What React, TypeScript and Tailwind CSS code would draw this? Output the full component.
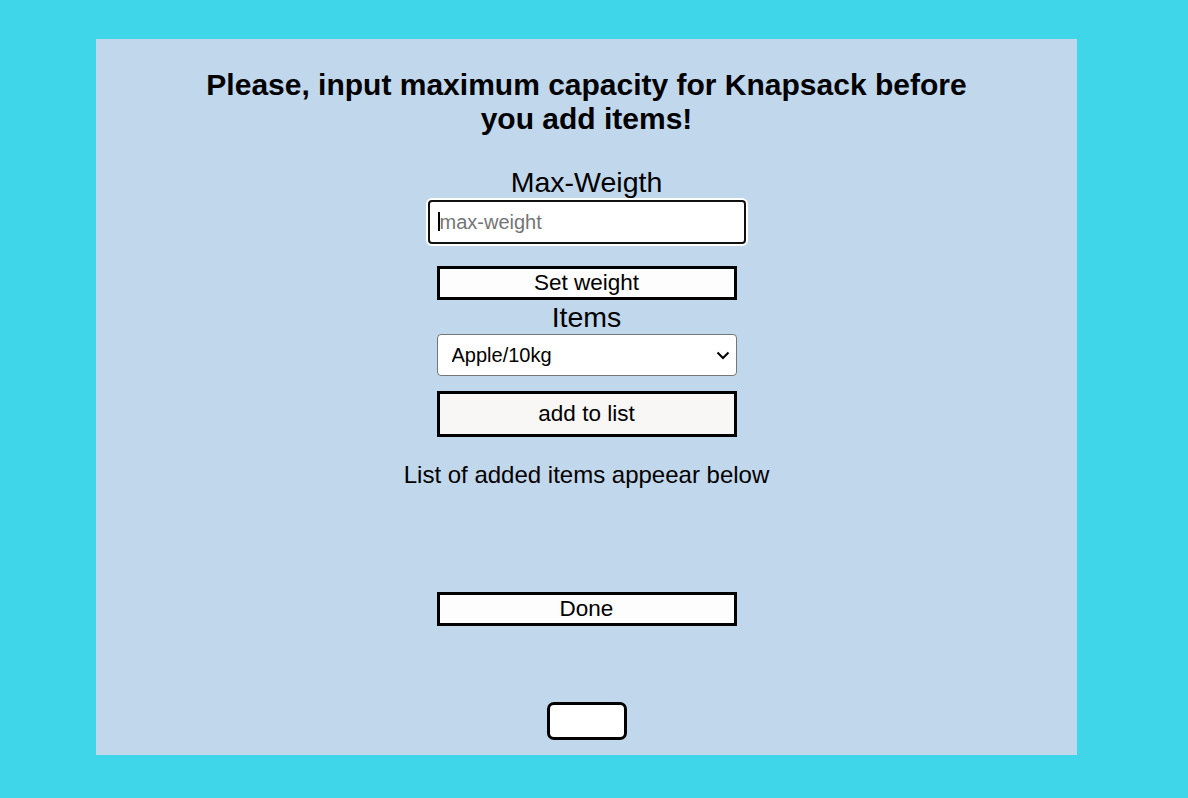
export default function App() {
    return (
        <div className="min-h-[798px] bg-[#40d6e9] pt-[39px] pl-[96px] font-['Liberation_Sans',Arial,sans-serif] text-black">
            <div className="w-[981px] h-[716px] bg-[#c1d7eb] flex flex-col items-center">
                <h2 className="mt-[29px] w-[800px] text-center text-[30px] leading-[34px] font-bold">
                    Please, input maximum capacity for Knapsack before you add items!
                </h2>

                <label className="mt-[30px] text-[28.5px] leading-[32px]">Max-Weigth</label>
                <div className="relative mt-[2px]">
                    <input
                        type="text"
                        placeholder="max-weight"
                        className="w-[318px] h-[44px] px-[10px] border-2 border-[#101010] rounded-[4px] bg-white text-[20px] placeholder:text-[#757575] outline-none shadow-[0_0_0_2px_#ffffff]"
                    />
                    <span className="absolute left-[10px] top-[12px] w-[2px] h-[19px] bg-black" />
                </div>

                <button className="mt-[22px] w-[300px] h-[34px] border-[3px] border-black bg-[#fdfdfd] text-[22.5px] leading-none">
                    Set weight
                </button>

                <label className="text-[28.5px] leading-[34px]">Items</label>
                <div className="relative w-[300px] h-[42px]">
                    <select className="appearance-none w-full h-full pl-[14px] pr-8 border border-[#767676] rounded-[4px] bg-white text-[20px] outline-none">
                        <option>Apple/10kg</option>
                        <option>Banana/5kg</option>
                        <option>Orange/8kg</option>
                    </select>
                    <svg className="pointer-events-none absolute right-[7px] top-[17px]" width="14" height="9" viewBox="0 0 14 9" fill="none">
                        <path d="M1.5 1.5 L7 7 L12.5 1.5" stroke="#000" strokeWidth="2" />
                    </svg>
                </div>

                <button className="mt-[15px] w-[300px] h-[46px] border-[3px] border-black bg-[#f8f7f5] text-[22.5px] leading-none">
                    add to list
                </button>

                <p className="mt-[24px] text-[24px] leading-[28px]">List of added items appeear below</p>

                <button className="mt-[103px] w-[300px] h-[34px] border-[3px] border-black bg-[#fdfdfd] text-[22.5px] leading-none">
                    Done
                </button>

                <button className="mt-[76px] w-[80px] h-[38px] border-[3px] border-black rounded-[7px] bg-white text-white text-[22px] leading-none">
                    Refill
                </button>
            </div>
        </div>
    );
}
